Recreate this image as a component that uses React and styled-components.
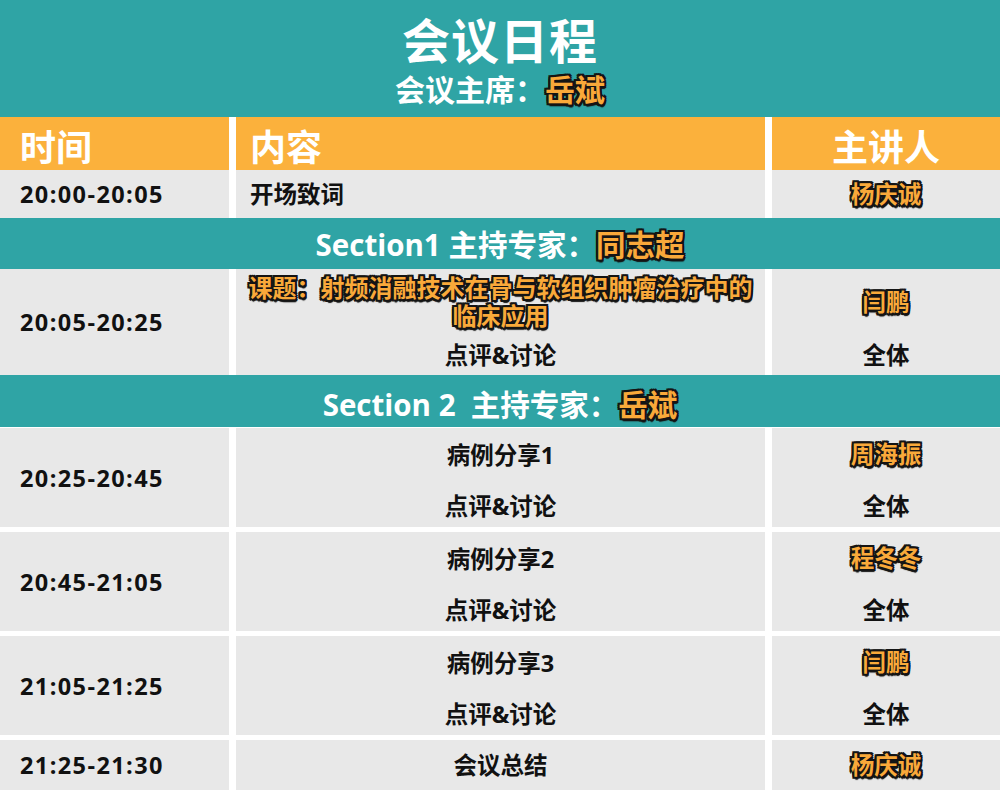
import styled, { createGlobalStyle } from 'styled-components';

const TEAL = '#2FA4A5';
const ORANGE = '#FBB13C';
const GRAY = '#E8E8E8';

const GlobalStyle = createGlobalStyle`
  body {
    margin: 0;
    background: #fff;
    font-family: "Open Sans", "Noto Sans CJK SC", sans-serif;
  }
`;

const Page = styled.div`
  width: 1000px;
  height: 790px;
  overflow: hidden;
  background: #fff;
`;

const Banner = styled.header`
  height: 117px;
  background: ${TEAL};
  color: #fff;
  display: flex;
  flex-direction: column;
  align-items: center;
`;

const Title = styled.h1`
  margin: 14px 0 0;
  font-size: 48px;
  line-height: 54px;
  font-weight: 700;
  letter-spacing: 1px;
`;

const Chair = styled.div`
  margin-top: 3px;
  font-size: 30px;
  line-height: 38px;
  font-weight: 700;
`;

const Name = styled.span`
  color: #F9A93A;
  text-shadow:
    -2px -2px 0 #141414, 2px -2px 0 #141414, -2px 2px 0 #141414, 2px 2px 0 #141414,
    0 -2px 0 #141414, 0 2px 0 #141414, -2px 0 0 #141414, 2px 0 0 #141414,
    1px 3px 1px #141414;
`;

const Grid = styled.div`
  display: grid;
  grid-template-columns: 229px 1fr 228px;
  grid-template-rows: ${(p) => p.$rows || 'auto'};
  column-gap: 7px;
  margin-top: ${(p) => p.$gap || 0}px;
`;

const HeadCell = styled.div`
  background: ${ORANGE};
  height: 53px;
  color: #fff;
  font-size: 36px;
  font-weight: 700;
  display: flex;
  align-items: center;
  justify-content: ${(p) => (p.$center ? 'center' : 'flex-start')};
  padding-left: ${(p) => (p.$center ? 0 : p.$pad || 20)}px;
  padding-top: 4px;
  box-sizing: border-box;
`;

const Cell = styled.div`
  background: ${GRAY};
  color: #111;
  font-size: 23.5px;
  font-weight: 700;
  line-height: 28px;
  display: flex;
  align-items: center;
  justify-content: ${(p) => (p.$left ? 'flex-start' : 'center')};
  text-align: center;
  padding-left: ${(p) => p.$pad || 0}px;
  padding-top: ${(p) => p.$top || 0}px;
  box-sizing: border-box;
`;

const TimeCell = styled(Cell)`
  grid-column: 1;
  grid-row: 1 / -1;
  justify-content: flex-start;
  padding-left: 20px;
  letter-spacing: 1.4px;
`;

const Topic = styled(Name)`
  font-size: 24px;
  line-height: 28px;
`;

const Section = styled.div`
  height: ${(p) => p.$h}px;
  background: ${TEAL};
  color: #fff;
  font-size: 29.5px;
  font-weight: 700;
  display: flex;
  align-items: center;
  justify-content: center;
  padding-top: ${(p) => p.$top || 0}px;
  box-sizing: border-box;
  white-space: pre;
`;

const talks = [
  { time: '20:25-20:45', title: '病例分享1', speaker: '周海振' },
  { time: '20:45-21:05', title: '病例分享2', speaker: '程冬冬' },
  { time: '21:05-21:25', title: '病例分享3', speaker: '闫鹏' },
];

function CaseRow({ time, title, speaker, gap }) {
  return (
    <Grid $rows="50px 49px" $gap={gap}>
      <TimeCell>{time}</TimeCell>
      <Cell $top={4}>{title}</Cell>
      <Cell $top={2}><Name>{speaker}</Name></Cell>
      <Cell $top={6}>点评&amp;讨论</Cell>
      <Cell $top={6}>全体</Cell>
    </Grid>
  );
}

export default function App() {
  return (
    <Page>
      <GlobalStyle />
      <Banner>
        <Title>会议日程</Title>
        <Chair>会议主席：<Name>岳斌</Name></Chair>
      </Banner>

      <Grid>
        <HeadCell>时间</HeadCell>
        <HeadCell $pad={14}>内容</HeadCell>
        <HeadCell $center>主讲人</HeadCell>
      </Grid>

      <Grid $rows="48px">
        <TimeCell>20:00-20:05</TimeCell>
        <Cell $left $pad={14}>开场致词</Cell>
        <Cell><Name>杨庆诚</Name></Cell>
      </Grid>

      <Section $h={51}>Section1 主持专家：<Name>同志超</Name></Section>

      <Grid $rows="66px 40px">
        <TimeCell>20:05-20:25</TimeCell>
        <Cell><Topic>课题：射频消融技术在骨与软组织肿瘤治疗中的<br />临床应用</Topic></Cell>
        <Cell><Name>闫鹏</Name></Cell>
        <Cell>点评&amp;讨论</Cell>
        <Cell>全体</Cell>
      </Grid>

      <Section $h={52} $top={4}>Section 2  主持专家：<Name>岳斌</Name></Section>

      {talks.map((t, i) => (
        <CaseRow key={t.time} {...t} gap={i === 0 ? 1 : 5} />
      ))}

      <Grid $rows="50px" $gap={5}>
        <TimeCell>21:25-21:30</TimeCell>
        <Cell>会议总结</Cell>
        <Cell><Name>杨庆诚</Name></Cell>
      </Grid>
    </Page>
  );
}
